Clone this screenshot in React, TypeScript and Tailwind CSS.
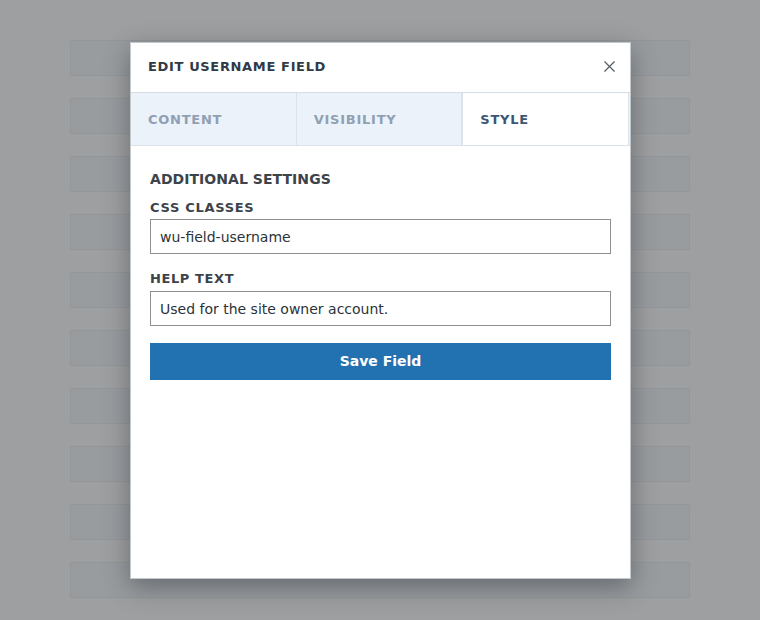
import { X } from "lucide-react";

const rows = Array.from({ length: 10 }, (_, i) => i);

const tabs = [
  { id: "content", label: "CONTENT" },
  { id: "visibility", label: "VISIBILITY" },
  { id: "style", label: "STYLE" },
];

export default function App() {
  const active = "style";

  return (
    <div
      className="relative h-[620px] w-[760px] overflow-hidden bg-[#9e9fa0]"
      style={{ fontFamily: '"DejaVu Sans", "Noto Sans", sans-serif' }}
    >
      {/* page behind the overlay */}
      <div className="flex flex-col gap-[22px] px-[70px] pt-[40px]">
        {rows.map((row) => (
          <div
            key={row}
            className="h-[36px] border border-[#939799] bg-[#989c9f]"
          />
        ))}
      </div>

      <div className="absolute left-[130px] top-[42px] flex h-[537px] w-[501px] flex-col border border-[#c3c8cd] bg-white shadow-[0_8px_24px_rgba(40,44,50,0.45)]">
        <div className="flex h-[50px] shrink-0 items-center justify-between border-b border-[#d5dde5] pb-[2px] pl-[17px] pr-[11px]">
          <h2 className="text-[13px] font-bold tracking-[0.65px] text-[#2f3a46]">
            EDIT USERNAME FIELD
          </h2>
          <button className="text-[#50575e]">
            <X className="h-[19px] w-[19px]" strokeWidth={1.4} />
          </button>
        </div>

        <div className="flex h-[53px] shrink-0 border-b border-[#dbe3ea] bg-[#ebf2f9] pr-[1px]">
          {tabs.map((tab) =>
            tab.id === active ? (
              <div
                key={tab.id}
                className="flex flex-1 items-center border-x border-[#dbe3ea] bg-white pl-[17px] pt-[2px] text-[13px] font-bold tracking-[0.75px] text-[#3b5675]"
              >
                {tab.label}
              </div>
            ) : (
              <div
                key={tab.id}
                className="flex flex-1 items-center border-r border-[#dbe3ea] pl-[17px] pt-[2px] text-[13px] font-bold tracking-[0.75px] text-[#90a0b3] last:border-r-0"
              >
                {tab.label}
              </div>
            ),
          )}
        </div>

        <div className="flex flex-col px-[19px] pt-[23px]">
          <p className="text-[14px] leading-[20px] font-bold tracking-[0.05px] text-[#3c434a]">
            ADDITIONAL SETTINGS
          </p>
          <label className="mt-[10px] text-[13px] leading-[18px] font-bold tracking-[0.7px] text-[#3c434a]">
            CSS CLASSES
          </label>
          <input
            readOnly
            value="wu-field-username"
            className="mt-[2px] h-[35px] w-full border border-[#8c8f94] px-[9px] text-[14px] text-[#2c3338] outline-none"
          />
          <label className="mt-[16px] text-[13px] leading-[18px] font-bold tracking-[0.6px] text-[#3c434a]">
            HELP TEXT
          </label>
          <input
            readOnly
            value="Used for the site owner account."
            className="mt-[3px] h-[35px] w-full border border-[#8c8f94] px-[9px] text-[14px] text-[#2c3338] outline-none"
          />
          <button className="mt-[17px] h-[37px] w-full bg-[#2271b1] text-[14px] font-bold text-white">
            Save Field
          </button>
        </div>
      </div>
    </div>
  );
}
